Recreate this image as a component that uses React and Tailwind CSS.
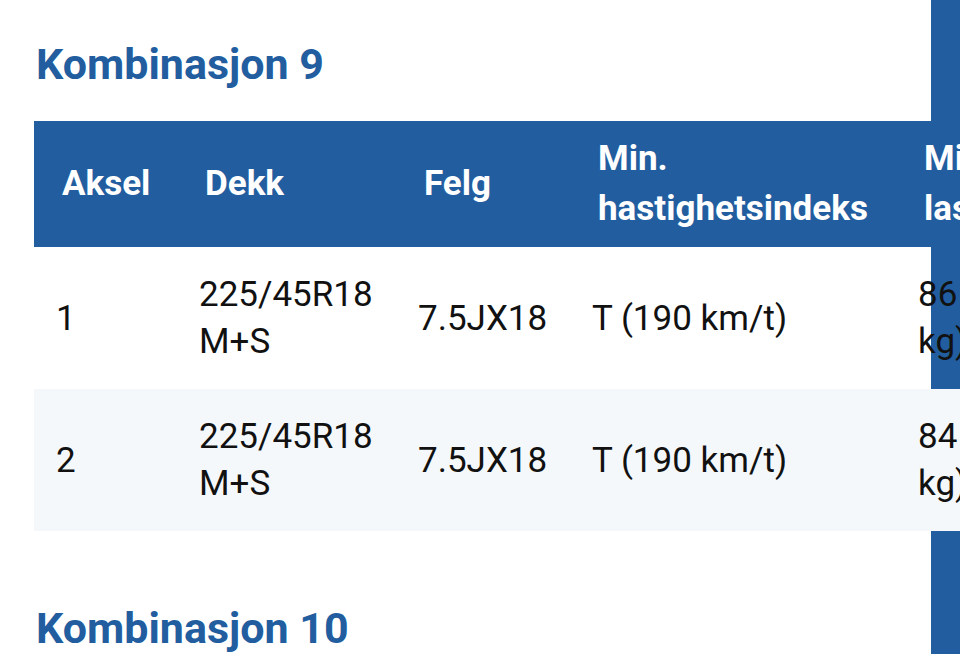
const rows = [
  { aksel: '1', dekk: '225/45R18 M+S', felg: '7.5JX18', hast: 'T (190 km/t)', last: '86 (530 kg)', shade: false },
  { aksel: '2', dekk: '225/45R18 M+S', felg: '7.5JX18', hast: 'T (190 km/t)', last: '84 (500 kg)', shade: true },
];

const App = () => {
  return (
    <div className="relative h-[654px] w-[960px] overflow-hidden bg-white font-['Roboto',sans-serif]">
      {/* side bar behind the table */}
      <div className="absolute top-0 bottom-0 left-[931px] w-[29px] bg-[#225e9f]" />

      <div className="relative pl-[34px] pt-[36px]">
        <h2 className="text-[43px] leading-[56px] font-bold text-[#225e9f] pl-[2px]">Kombinasjon 9</h2>

        <table className="mt-[29px] w-[1120px] table-fixed border-collapse text-[35px] text-[#111]">
          <colgroup>
            <col className="w-[143px]" />
            <col className="w-[219px]" />
            <col className="w-[174px]" />
            <col className="w-[326px]" />
            <col />
          </colgroup>
          <thead>
            <tr className="bg-[#225e9f] text-white h-[126px]">
              <th className="px-[28px] text-left align-middle font-bold leading-[50px]">Aksel</th>
              <th className="px-[28px] text-left align-middle font-bold leading-[50px]">Dekk</th>
              <th className="px-[28px] text-left align-middle font-bold leading-[50px]">Felg</th>
              <th className="px-[28px] text-left align-middle font-bold leading-[50px]">Min. hastighetsindeks</th>
              <th className="px-[28px] text-left align-middle font-bold leading-[50px]">Min. lastindeks</th>
            </tr>
          </thead>
          <tbody>
            {rows.map(r => (
              <tr key={r.aksel} className={`h-[142px] ${r.shade ? 'bg-[#f5f8fa]' : ''}`}>
                <td className="px-[22px] align-middle leading-[47px]">{r.aksel}</td>
                <td className="px-[22px] align-middle leading-[47px] whitespace-normal">{r.dekk}</td>
                <td className="px-[22px] align-middle leading-[47px]">{r.felg}</td>
                <td className="px-[22px] align-middle leading-[47px]">{r.hast}</td>
                <td className="px-[22px] align-middle leading-[47px]">
                  <span className="block w-[160px]">{r.last}</span>
                </td>
              </tr>
            ))}
          </tbody>
        </table>

        <h2 className="mt-[69px] text-[43px] leading-[56px] font-bold text-[#225e9f] pl-[2px]">Kombinasjon 10</h2>
      </div>
    </div>
  );
};

export default App;
